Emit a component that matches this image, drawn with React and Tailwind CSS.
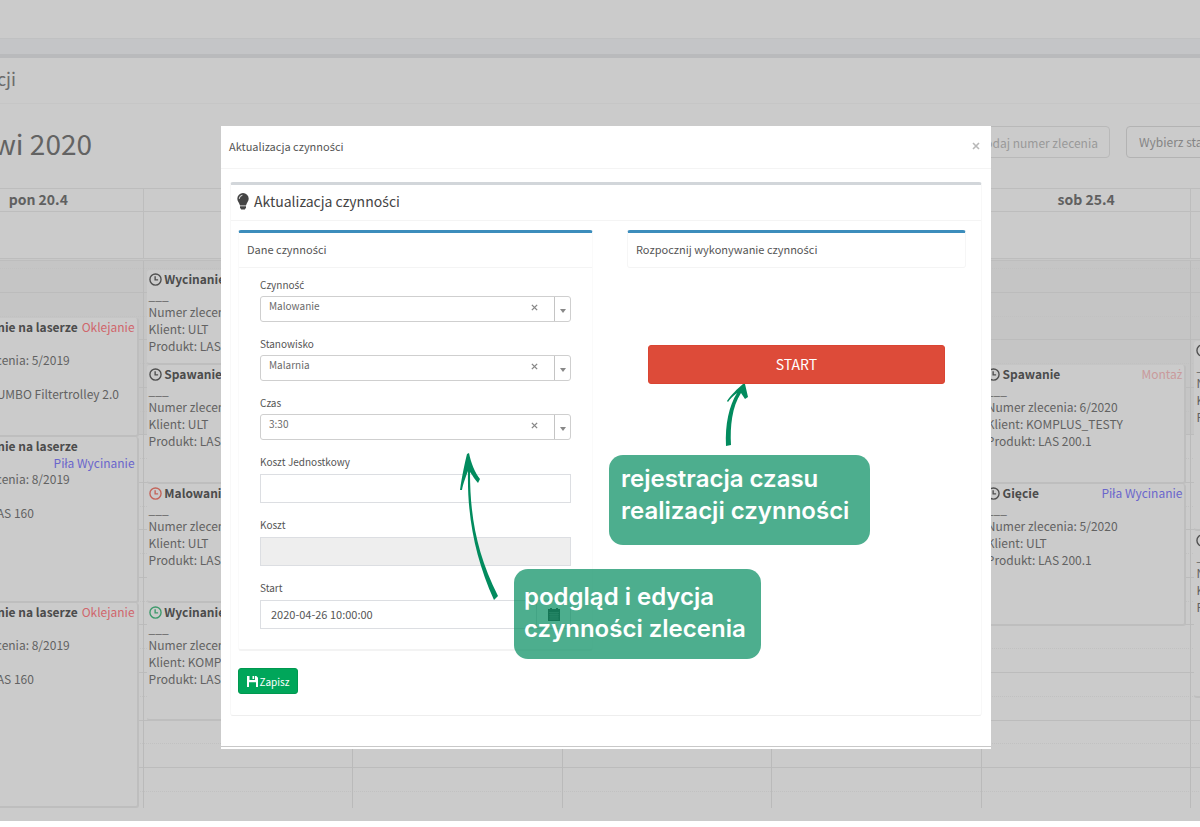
import { useState } from "react";

const days = [
    {
        name: "pon 20.4",
        offset: "pt-[57px]",
        events: [
            { title: "Wycinanie na laserze", tag: "Oklejanie", tagColor: "text-[#d0666b]", order: "5/2019", client: "ULT", product: "JUMBO Filtertrolley 2.0", height: "h-[119px]", icon: "text-[#505050]" },
            { title: "Wycinanie na laserze", tag: "Piła Wycinanie", tagColor: "text-[#6a66cc]", order: "8/2019", client: "ULT", product: "LAS 160", height: "h-[166px]", icon: "text-[#505050]" },
            { title: "Wycinanie na laserze", tag: "Oklejanie", tagColor: "text-[#d0666b]", order: "8/2019", client: "ULT", product: "LAS 160", height: "h-[205px]", icon: "text-[#505050]" },
        ],
    },
    {
        name: "wt 21.4",
        offset: "pt-[9px]",
        events: [
            { title: "Wycinanie", order: "5/2020", client: "ULT", product: "LAS 200.1", height: "h-[95px]", icon: "text-[#505050]" },
            { title: "Spawanie", order: "5/2020", client: "ULT", product: "LAS 200.1", height: "h-[119px]", icon: "text-[#505050]" },
            { title: "Malowanie", order: "5/2020", client: "ULT", product: "LAS 200.1", height: "h-[119px]", icon: "text-[#c4655a]" },
            { title: "Wycinanie", order: "6/2020", client: "KOMPLUS_TESTY", product: "LAS 200.1", height: "h-[118px]", icon: "text-[#3f9a6c]" },
        ],
    },
    { name: "śr 22.4", offset: "pt-0", events: [] },
    { name: "czw 23.4", offset: "pt-0", events: [] },
    { name: "pt 24.4", offset: "pt-0", events: [] },
    {
        name: "sob 25.4",
        offset: "pt-[104px]",
        events: [
            { title: "Spawanie", tag: "Montaż", tagColor: "text-[#c99a9b]", order: "6/2020", client: "KOMPLUS_TESTY", product: "LAS 200.1", height: "h-[119px]", icon: "text-[#505050]" },
            { title: "Gięcie", tag: "Piła Wycinanie", tagColor: "text-[#6a66cc]", order: "5/2020", client: "ULT", product: "LAS 200.1", height: "h-[142px]", icon: "text-[#505050]" },
        ],
    },
    {
        name: "niedz 26.4",
        offset: "pt-[80px]",
        events: [
            { title: "Malowanie", order: "5/2020", client: "ULT", product: "LAS 200.1", height: "h-[190px]", icon: "text-[#505050]" },
            { title: "Montaż", order: "5/2020", client: "ULT", product: "LAS 200.1", height: "h-[167px]", icon: "text-[#505050]" },
        ],
    },
];

const slots = Array.from({ length: 22 }, (_, i) => i);

// the main font has no ś, ć and ż, those letters come from Noto Sans
function Polish({ children }) {
    return children.split(/([śćż])/).map((part, i) =>
        i % 2 ? <span key={i} className="font-['Noto_Sans',sans-serif] leading-none">{part}</span> : part
    );
}

function ClockIcon({ className }) {
    return (
        <svg viewBox="0 0 14 14" className={"inline-block size-[13px] align-[-2px] " + className} fill="none" stroke="currentColor" strokeWidth="1.5">
            <circle cx="7" cy="7" r="6" />
            <path d="M6.6 3.6V7.4H9.8" />
        </svg>
    );
}

function CalendarEvent({ event }) {
    return (
        <div className={"overflow-hidden rounded-[3px] border-r-2 border-b-2 border-[#bebebe] bg-[#cbcbcb] px-[2px] text-[12px]/[17px] text-[#626262] " + event.height}>
            <span className="whitespace-nowrap font-bold text-[#4c4c4c]">
                <ClockIcon className={event.icon} /> <Polish>{event.title}</Polish>
            </span>
            {event.tag && <span className={"float-right whitespace-nowrap " + event.tagColor}><Polish>{event.tag}</Polish></span>}
            <p className="leading-[16px]">___</p>
            <p className="whitespace-nowrap">Numer zlecenia: {event.order}</p>
            <p className="whitespace-nowrap">Klient: {event.client}</p>
            <p className="whitespace-nowrap">Produkt: {event.product}</p>
        </div>
    );
}

function Calendar() {
    return (
        <div className="-ml-[66px] w-[1467px]">
            {/* day names */}
            <div className="grid grid-cols-7 border-t border-[#bdbdbd]">
                {days.map((day) => (
                    <div key={day.name} className="h-[23px] border-r border-b border-[#bdbdbd] text-center text-[14px]/[20px] font-bold text-[#606060]">
                        <Polish>{day.name}</Polish>
                    </div>
                ))}
            </div>

            {/* all day row */}
            <div className="grid grid-cols-7">
                {days.map((day) => (
                    <div key={day.name} className="h-[46px] border-r border-[#bdbdbd]"></div>
                ))}
            </div>
            <div className="h-[3px] border-y border-[#bdbdbd] bg-[#c8c8c8]"></div>

            {/* time grid */}
            <div className="relative h-[547px] overflow-hidden">
                <div className="absolute inset-0 flex flex-col">
                    <div className="h-[174px] bg-[#c5c5c5]"></div>
                </div>
                <div className="absolute inset-0 flex flex-col pt-[7px] pb-4">
                    {slots.map((slot) => (
                        <div key={slot} className="flex-1 border-t border-[#c1c1c1] odd:border-dotted even:border-[#bcbcbc]"></div>
                    ))}
                    <div className="border-t border-dotted border-[#c1c1c1]"></div>
                </div>
                <div className="relative grid h-full grid-cols-7">
                    {days.map((day) => (
                        <div key={day.name} className={"border-r border-[#bababa] pr-[4px] pl-[3px] " + day.offset}>
                            {day.events.map((event, i) => (
                                <CalendarEvent key={i} event={event} />
                            ))}
                        </div>
                    ))}
                </div>
            </div>
        </div>
    );
}

function ComboField({ id, label, value }) {
    return (
        <div>
            <label htmlFor={id} className="block text-[10px]/[16px]"><Polish>{label}</Polish></label>
            <div className="mt-[3px] flex h-[26px] rounded-[3px] border border-[#cfcfcf]">
                <select id={id} className="min-w-0 flex-1 appearance-none pb-[6px] pl-2 text-[10px]/[16px] text-[#6a6a6a]">
                    <option>{value}</option>
                </select>
                <button type="button" aria-label="Wyczyść" className="mr-[15px] mb-1 flex w-[10px] items-center justify-center text-[#888]">
                    <svg viewBox="0 0 8 8" className="size-[7px]" stroke="currentColor" strokeWidth="1.6">
                        <path d="M1 1l6 6M7 1l-6 6" />
                    </svg>
                </button>
                <span className="flex w-4 items-center justify-center border-l border-[#c4c4c4]">
                    <svg viewBox="0 0 6 4" className="mt-[3px] h-1 w-[6px] fill-[#888]">
                        <path d="M0 0h6L3 4z" />
                    </svg>
                </span>
            </div>
        </div>
    );
}

function CalendarGlyph() {
    return (
        <svg viewBox="0 0 12 13" className="h-[13px] w-3">
            <path fill="#444" d="M0 1h12v12H0z" />
            <path stroke="#999" strokeWidth=".5" d="M1 4.5h10M1 6.7h10M1 8.9h10M1 11.1h10M3 4.5v7M5 4.5v7M7 4.5v7M9 4.5v7" />
            <path fill="#444" d="M2 0h2v2H2zM8 0h2v2H8z" />
        </svg>
    );
}

function BulbGlyph() {
    return (
        <svg viewBox="0 0 12 17" className="h-[17px] w-3">
            <path fill="#444" d="M6 0a5.7 5.7 0 0 1 5.7 5.7C11.7 8.4 9.6 9.600 9 12.500H3C2.400 9.600.3 8.400.3 5.700A5.700 5.700 0 0 1 6 0z" />
            <path fill="#444" d="M3 13.300h6v1.500l-1.200 1.700H4.200L3 14.800z" />
            <path stroke="#fff" strokeWidth=".9" fill="none" d="M2.300 5.800A3.500 3.500 0 0 1 5.400 2.300" />
        </svg>
    );
}

function FloppyGlyph() {
    return (
        <svg viewBox="0 0 11 11" className="size-[11px] fill-white">
            <path fillRule="evenodd" d="M0 0h2.500v4h5.500V0h1.300L11 1.700V11H9V6.300H2V11H0zM5.500 0h1.700v3H5.500z" />
        </svg>
    );
}

function ActivityForm() {
    const [unitCost, setUnitCost] = useState("");
    const [start, setStart] = useState("2020-04-26 10:00:00");

    return (
        <div className="rounded-[3px] border-x border-t-3 border-b-2 border-x-[#fafafa] border-t-[#3c8dbc] border-b-[#f3f3f3]">
            <h4 className="h-[35px] border-b border-[#f4f4f4] pl-2 text-[11px]/[32px] text-[#555]"><Polish>Dane czynności</Polish></h4>
            <div className="flex flex-col gap-[14px] pt-[9px] pr-[21px] pb-5 pl-[21px] text-[#555]">
                <ComboField id="activity" label="Czynność" value="Malowanie" />
                <ComboField id="station" label="Stanowisko" value="Malarnia" />
                <ComboField id="time" label="Czas" value="3:30" />
                <div>
                    <label htmlFor="unit-cost" className="block text-[10px]/[16px]">Koszt Jednostkowy</label>
                    <input id="unit-cost" value={unitCost} onChange={(e) => setUnitCost(e.target.value)} className="mt-1 block h-[29px] w-full border border-[#dcdee2] px-[10px] text-[11px]" />
                </div>
                <div>
                    <label htmlFor="cost" className="block text-[10px]/[16px]">Koszt</label>
                    <input id="cost" disabled className="mt-1 block h-[29px] w-full border border-[#dcdee2] bg-[#eee] px-[10px] text-[11px]" />
                </div>
                <div>
                    <label htmlFor="start" className="block text-[10px]/[16px]">Start</label>
                    <div className="mt-1 flex h-[29px] border border-[#dcdee2]">
                        <input id="start" value={start} onChange={(e) => setStart(e.target.value)} className="min-w-0 flex-1 px-[10px] text-[11px]" />
                        <button type="button" aria-label="Kalendarz" className="flex w-[34px] items-center justify-center border-l border-[#dcdee2]">
                            <CalendarGlyph />
                        </button>
                    </div>
                </div>
            </div>
        </div>
    );
}

function ActivityModal() {
    return (
        <div className="relative w-[770px] bg-white pb-[2px]">
            {/* modal header */}
            <div className="flex h-[43px] items-center justify-between border-b border-[#f4f4f4] pr-[9px] pb-[2px] pl-2 text-[#555]">
                <h2 className="text-[11px]/[18px]"><Polish>Aktualizacja czynności</Polish></h2>
                <button type="button" aria-label="Zamknij" className="flex size-3 items-center justify-center text-[#b8b8b8]">
                    <svg viewBox="0 0 8 8" className="size-2" stroke="currentColor" strokeWidth="1.6">
                        <path d="M1 1l6 6M7 1l-6 6" />
                    </svg>
                </button>
            </div>

            <div className="mx-[9px] mt-[13px] rounded-[3px] border-x border-t-3 border-b border-x-[#f8f8f8] border-t-[#d2d6da] border-b-[#eee]">
                <h3 className="flex h-[36px] items-center gap-[5px] border-b border-[#f4f4f4] pb-[3px] pl-[6px] text-[14px]/[20px] text-[#444]">
                    <BulbGlyph />
                    <span><Polish>Aktualizacja czynności</Polish></span>
                </h3>

                <div className="grid grid-cols-[355fr_339fr] gap-[34px] pt-[9px] pr-[15px] pl-[7px]">
                    <ActivityForm />

                    {/* start registration */}
                    <div>
                        <h4 className="h-[38px] rounded-[3px] border-x border-t-3 border-b border-x-[#f6f6f6] border-t-[#3c8dbc] border-b-[#f4f4f4] pl-2 text-[11px]/[32px] text-[#555]">
                            <Polish>Rozpocznij wykonywanie czynności</Polish>
                        </h4>
                        <div className="px-[21px] pt-[77px]">
                            <button type="button" className="h-[39px] w-full rounded-[3px] border border-[#da4432] bg-[#dd4b39] text-[14px] text-white">START</button>
                        </div>
                    </div>
                </div>

                <div className="pt-[17px] pb-[21px] pl-[7px]">
                    <button type="button" className="flex h-[26px] w-[60px] items-center justify-center gap-[2px] rounded-[3px] border border-[#00984f] bg-[#00a65a] text-[10px] text-white">
                        <FloppyGlyph />
                        Zapisz
                    </button>
                </div>
            </div>
            <div className="mt-[30px] border-b border-[#c8c8c8]"></div>

            {/* hints over the form */}
            <svg viewBox="0 0 40 150" className="absolute top-[326px] left-[237px] h-[150px] w-10">
                <path fill="#028b5e" d="M11 1C13 11 17 21 22 27L20 31C17 28 15 24 12 20C12 65 19 102 40 144L36 148C17 106 9 64 10 19C8 24 5 32 4 38H2C4 24 7 10 9 2z" />
            </svg>
            <svg viewBox="0 0 26 64" className="absolute top-[258px] left-[502px] h-16 w-[26px]">
                <path fill="#028b5e" d="M20 0H22L25 13L22 15L18 9C9 23 7 42 8 61L3 62C2 40 6 22 14 9C10 12 7 15 5 18L4 17C7 12 15 4 20 0z" />
            </svg>
            <p className="absolute top-[329px] left-[388px] h-[90px] w-[261px] rounded-[14px] bg-[#028b5e]/70 pt-2 pl-3 font-['Inter','Noto_Sans',sans-serif] text-[24px]/[32px] font-semibold whitespace-nowrap text-white">
                rejestracja czasu<br />realizacji czynności
            </p>
            <p className="absolute top-[443px] left-[293px] h-[90px] w-[247px] rounded-[14px] bg-[#028b5e]/70 pt-3 pl-[10px] font-['Inter','Noto_Sans',sans-serif] text-[24px]/[32px] font-semibold whitespace-nowrap text-white">
                podgląd i edycja<br />czynności zlecenia
            </p>
        </div>
    );
}

function App() {
    return (
        <div className="relative overflow-hidden bg-white font-['Noto_Sans_CJK_SC','Noto_Sans',sans-serif]">
            <div className="overflow-hidden bg-[#cbcbcb] pb-[13px]">
                {/* top bar */}
                <div className="h-[38px]"></div>
                <div className="h-4 border-t border-[#c0c1c2] bg-[#c4c5c7]"></div>
                <div className="h-1 bg-[#b9babc]"></div>

                {/* page title, the left part is scrolled out of view */}
                <div className="h-[46px] border-b border-[#c6c6c6]">
                    <h1 className="flex w-4 justify-end text-[18px]/[40px] whitespace-nowrap text-[#6c6c6c]">Harmonogram realizacji</h1>
                </div>

                <div className="flex h-[84px] items-start justify-end pt-[22px]">
                    <h2 className="mr-auto flex w-[92px] justify-end text-[28px]/[34px] whitespace-nowrap text-[#636363]">20 – 26 kwi 2020</h2>
                    <input aria-label="Numer zlecenia" placeholder="Dodaj numer zlecenia" className="h-8 w-[160px] rounded-[4px] border border-[#b9b9b9] px-[11px] text-right text-[12px] placeholder:text-[#999]" />
                    <select aria-label="Stanowisko" className="-mr-[102px] ml-4 h-8 w-44 appearance-none rounded-[4px] border border-[#b3b3b3] px-3 text-[12px] text-[#858585]">
                        <option>Wybierz stanowisko</option>
                    </select>
                </div>

                <Calendar />
            </div>

            <div className="absolute inset-0 flex items-start justify-center pt-[126px] pl-3">
                <ActivityModal />
            </div>
        </div>
    );
}

export default App;
